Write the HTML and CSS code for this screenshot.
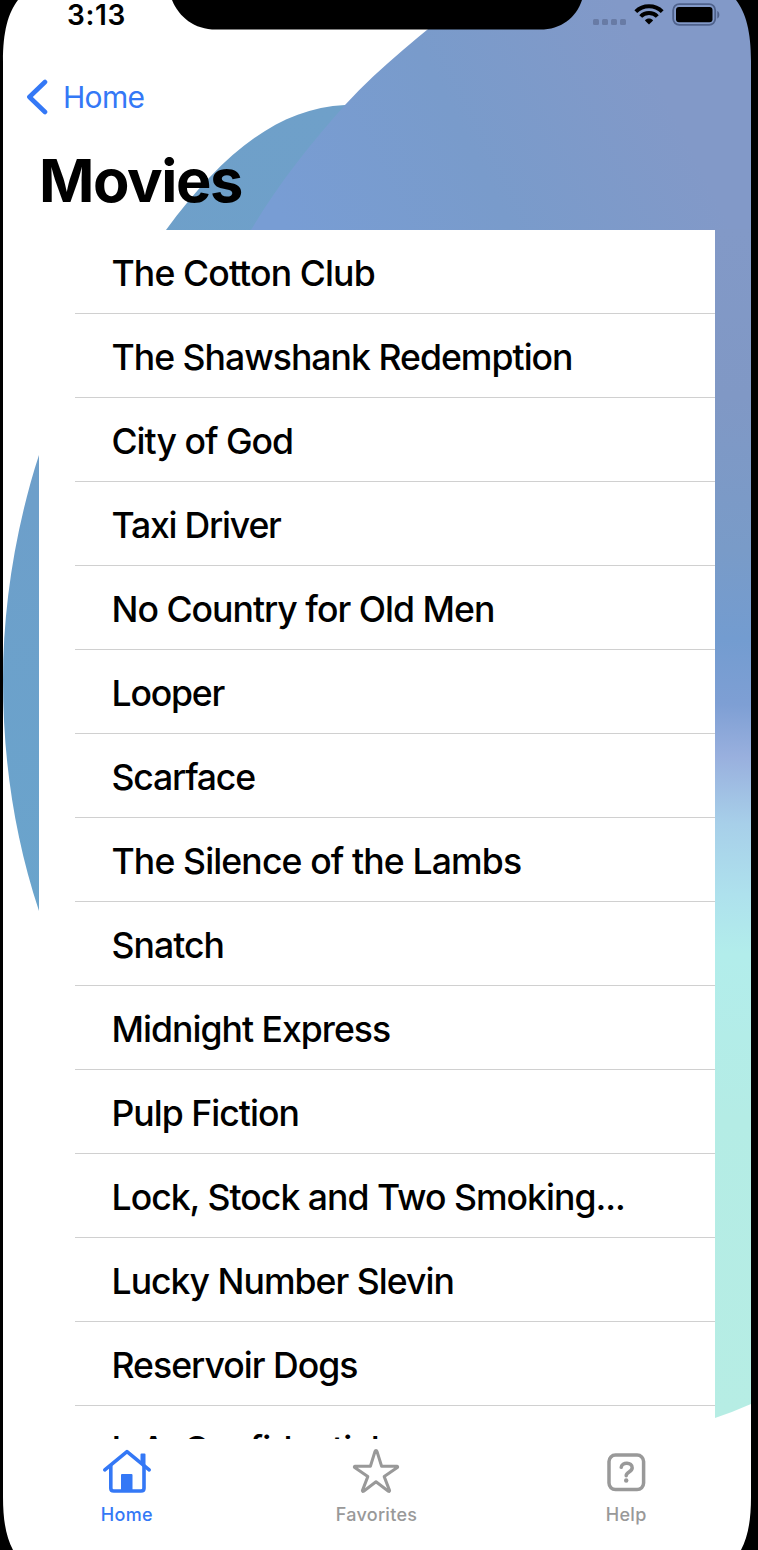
FILE: index.html
```
<!DOCTYPE html>
<html lang="en">
<head>
<meta charset="utf-8">
<title>Movies</title>
<link rel="stylesheet" href="styles.css">
</head>
<body>
<div class="phone">
  <svg class="wallpaper" viewBox="0 0 758 1550" aria-hidden="true">
    <defs>
      <linearGradient id="teal" x1="0" y1="0" x2="0" y2="1">
        <stop offset="0" stop-color="#6fa0c9"/><stop offset="0.5" stop-color="#6d9fca"/><stop offset="1" stop-color="#6aa4cc"/>
      </linearGradient>
      <linearGradient id="sky" gradientUnits="userSpaceOnUse" x1="285" y1="225" x2="640" y2="45">
        <stop offset="0" stop-color="#789dd4"/><stop offset="0.5" stop-color="#799bcb"/><stop offset="1" stop-color="#8299c8"/>
      </linearGradient>
      <linearGradient id="edge" gradientUnits="userSpaceOnUse" x1="745" y1="230" x2="715" y2="1416">
        <stop offset="0" stop-color="#8299c7"/><stop offset="0.14" stop-color="#8098c5"/><stop offset="0.27" stop-color="#799bc8"/><stop offset="0.345" stop-color="#739cd0"/><stop offset="0.4" stop-color="#7e9fd4"/><stop offset="0.445" stop-color="#99b0de"/><stop offset="0.5" stop-color="#a7cfe9"/><stop offset="0.56" stop-color="#aee1ed"/><stop offset="0.61" stop-color="#b2edeb"/><stop offset="0.75" stop-color="#b4ece5"/><stop offset="1" stop-color="#b6ede4"/>
      </linearGradient>
    </defs>
    <path fill="url(#teal)" d="M360 105H345C276 108 220 157 166 230C110 305 66 370 39 455C15 529 3 608 3 680C3 759 14 835 39 911H400V105Z"/>
    <path fill="url(#sky)" d="M464 0C423 33 382 65 345 105C310 144 277 186 251 230H758V0Z"/>
    <path fill="url(#edge)" d="M700 229H751V1404Q733 1412 715 1418H700Z"/>
  </svg>

  <header class="status">
    <span class="clock">3:13</span>
    <span class="indicators">
      <svg class="signal" viewBox="0 0 34 6"><g fill="#687ba5"><rect width="6" height="6" rx="1.5"/><rect x="9" width="6" height="6" rx="1.5"/><rect x="18" width="6" height="6" rx="1.5"/><rect x="27" width="6" height="6" rx="1.5"/></g></svg>
      <svg class="wifi" viewBox="0 0 30 22"><g fill="none" stroke="#000" stroke-width="4"><path d="M1.8 8.6C9 1.4 21 1.4 28.2 8.6"/><path d="M6.7 13.5C11 8.9 19 8.9 23.3 13.5"/></g><path d="M10.9 17.4C13.2 15 16.8 15 19.1 17.4L15 21.5Z"/></svg>
      <svg class="battery" viewBox="0 0 50 24"><rect x="1.2" y="1.2" width="42" height="20.6" rx="6" fill="none" stroke="#4f628c" stroke-width="1.8"/><rect x="4" y="4" width="36.5" height="15.3" rx="3"/><path d="M45.3 8C48 9 48 14.5 45.3 15.5Z" fill="#4f628c"/></svg>
    </span>
  </header>

  <nav class="back">
    <svg class="chevron" viewBox="0 0 22 36"><path d="M19 3L3.4 18L19 33" fill="none" stroke="#3478f6" stroke-width="4.6" stroke-linecap="round" stroke-linejoin="round"/></svg>
    <span>Home</span>
  </nav>
  <h1 class="title">Movies</h1>

  <main class="panel">
    <ul class="movies">
      <li>The Cotton Club</li>
      <li>The Shawshank Redemption</li>
      <li>City of God</li>
      <li>Taxi Driver</li>
      <li>No Country for Old Men</li>
      <li>Looper</li>
      <li>Scarface</li>
      <li>The Silence of the Lambs</li>
      <li>Snatch</li>
      <li>Midnight Express</li>
      <li>Pulp Fiction</li>
      <li>Lock, Stock and Two Smoking...</li>
      <li>Lucky Number Slevin</li>
      <li>Reservoir Dogs</li>
      <li>L.A. Confidential</li>
    </ul>
  </main>

  <footer class="tabs">
    <div class="tab active">
      <svg viewBox="0 0 50 46"><g fill="none" stroke="currentColor" stroke-width="3.6" stroke-linecap="round" stroke-linejoin="round"><path d="M2.8 20.8L25 2.6L47.2 20.8"/><path d="M8.8 17V39.3Q8.8 42 11.8 42H39Q42 42 42 39.3V17"/></g><path fill="currentColor" d="M38.5 5.5Q38.5 4.5 39.5 4.5H42.5Q43.5 4.5 43.5 5.5V18L38.5 14ZM19 26Q19 25 20 25H29.5Q30.5 25 30.5 26V42H19Z"/></svg>
      <span>Home</span>
    </div>
    <div class="tab">
      <svg viewBox="0 0 50 46"><path d="M25 1.6C25.5 1.6 25.8 1.9 26 2.5L30.6 17.2L45.9 17.3C46.8 17.5 46.9 18.1 46.3 18.6L33.2 27.6L38.6 41.6C38.6 42.4 38.1 42.6 37.4 42.2L25 32.8L12.6 42.2C11.9 42.6 11.4 42.4 11.4 41.6L16.8 27.6L3.7 18.6C3.1 18.1 3.2 17.5 4.1 17.3L19.4 17.2L24 2.5C24.2 1.9 24.5 1.6 25 1.6Z" fill="none" stroke="currentColor" stroke-width="3" stroke-linejoin="round"/></svg>
      <span>Favorites</span>
    </div>
    <div class="tab">
      <svg viewBox="0 0 50 46"><rect x="8" y="6" width="34.6" height="34.6" rx="6.5" fill="none" stroke="currentColor" stroke-width="3.5"/><path d="M20.2 18.3C20.7 12.7 31.4 12.7 31.2 18.9C31 23 25.2 23.1 25.2 26.8" fill="none" stroke="currentColor" stroke-width="3.5" stroke-linecap="round"/><circle cx="25.2" cy="31.5" r="2.2" fill="currentColor"/></svg>
      <span>Help</span>
    </div>
  </footer>

  <svg class="bezel" viewBox="0 0 758 1550" aria-hidden="true">
    <path fill-rule="evenodd" d="M0 0H758V1550H0ZM18 0C8 13 3 32 3 61V1497C3 1520 6 1537 13 1550H741C748 1537 751 1520 751 1497V61C751 32 746 13 736 0Z"/>
    <path d="M172 0C179 17 194 29.6 216 29.6H540C561 29.6 576 18 582 0Z"/>
  </svg>
</div>
</body>
</html>
```
FILE: styles.css
```
* { box-sizing: border-box; }
body { margin: 0; background: #000; font-family: Inter, "Liberation Sans", sans-serif; }
.phone {
  position: relative;
  width: 758px;
  height: 1550px;
  overflow: hidden;
  background: #fff;
  display: flex;
  flex-direction: column;
}
.phone > * { position: relative; }
.phone > .wallpaper, .phone > .bezel {
  position: absolute;
  inset: 0;
  width: 758px;
  height: 1550px;
  pointer-events: none;
}
.status {
  height: 30px;
  padding: 0 36px 0 67px;
  display: flex;
  justify-content: space-between;
}
.clock { font-size: 28px; line-height: 30px; font-weight: 600; letter-spacing: 0.6px; }
.indicators { display: flex; align-items: flex-start; }
.signal { width: 34px; height: 6px; margin-top: 19px; }
.wifi { width: 30px; height: 22px; margin: 3px 8px 0 7px; }
.battery { width: 50px; height: 24px; margin-top: 3px; }
.back {
  height: 134px;
  padding-left: 26px;
  display: flex;
  align-items: center;
  gap: 15px;
  color: #3478f6;
  font-size: 30px;
  letter-spacing: -0.7px;
}
.chevron { width: 22px; height: 36px; }
.title {
  margin: -19px 0 0 39px;
  height: 85px;
  line-height: 70px;
  font-size: 59.5px;
  font-weight: 700;
  letter-spacing: -1.4px;
}
.panel {
  margin: 0 43px 0 39px;
  height: 1209px;
  padding-left: 36px;
  background: #fff;
  overflow: hidden;
}
.movies { list-style: none; margin: 0; padding: 0; }
.movies li {
  height: 84.04px;
  padding: 3px 0 0 36.5px;
  border-bottom: 1px solid #d0d0d0;
  font-size: 35.6px;
  line-height: 81px;
  font-weight: 500;
  letter-spacing: -0.98px;
  white-space: nowrap;
}
.movies li:nth-child(1), .movies li:nth-child(8), .movies li:nth-child(15) { letter-spacing: -0.87px; }
.movies li:nth-child(4), .movies li:nth-child(6), .movies li:nth-child(7) { letter-spacing: -1.2px; }
.tabs {
  height: 111px;
  padding: 10px 7px 0 2px;
  display: grid;
  grid-template-columns: repeat(3, 1fr);
}
.tab {
  display: flex;
  flex-direction: column;
  align-items: center;
  color: #999;
  font-size: 18px;
  line-height: 22px;
  font-weight: 500;
  letter-spacing: 0.3px;
}
.tab svg { width: 50px; height: 46px; margin-bottom: 9px; }
.active { color: #3478f6; }
```
